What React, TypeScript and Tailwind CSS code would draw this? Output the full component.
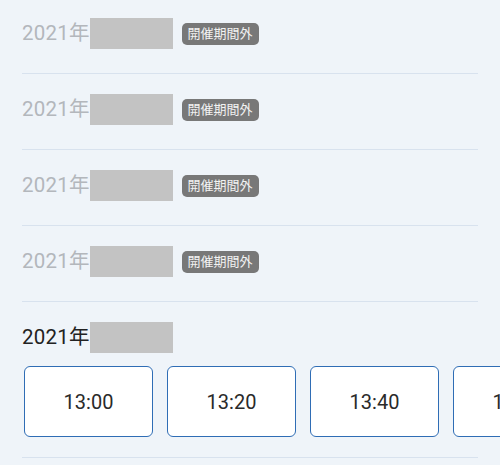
import React from 'react';

interface Session {
  id: number;
  active: boolean;
  times?: string[];
}

const sessions: Session[] = [
  { id: 1, active: false },
  { id: 2, active: false },
  { id: 3, active: false },
  { id: 4, active: false },
  { id: 5, active: true, times: ['13:00', '13:20', '13:40', '14:00'] },
];

function SessionRow({ session }: { session: Session }) {
  return (
    <div className={`border-b border-[#d8e2ee] pt-[20px] ${session.active ? 'pb-[20px]' : 'pb-[24px]'}`}>
      <div className="flex items-center h-[31px]">
        <span
          className={`text-[20.5px] leading-none tracking-[0.2px] ${session.active ? 'text-[#222]' : 'text-[#b3b7bc]'}`}
        >
          2021年
        </span>
        {/* 日付部分はマスク */}
        <span className="block w-[83px] h-[31px] bg-[#c3c3c3]" />
        {!session.active && (
          <span className="ml-[9px] inline-flex items-center h-[22px] px-[6px] rounded-[5px] bg-[#787878] text-[13px] text-[#f2f2f2] leading-none">
            開催期間外
          </span>
        )}
      </div>
      {session.times && (
        <div className="flex gap-[14px] mt-[13px] pl-[2px] mr-[-22px] overflow-hidden">
          {session.times.map((t) => (
            <button
              key={t}
              className="shrink-0 w-[129px] h-[71px] rounded-[6px] border-[1.5px] border-[#2f6db5] bg-white text-[20px] text-[#2a2a2a]"
            >
              {t}
            </button>
          ))}
        </div>
      )}
    </div>
  );
}

export default function App() {
  return (
    <div
      className="w-[500px] h-[465px] overflow-hidden bg-[#eff4f9]"
      style={{ fontFamily: 'Roboto, "Noto Sans CJK JP", sans-serif' }}
    >
      <div className="mx-[22px] mt-[-2px]">
        {sessions.map((s) => (
          <SessionRow key={s.id} session={s} />
        ))}
      </div>
    </div>
  );
}
